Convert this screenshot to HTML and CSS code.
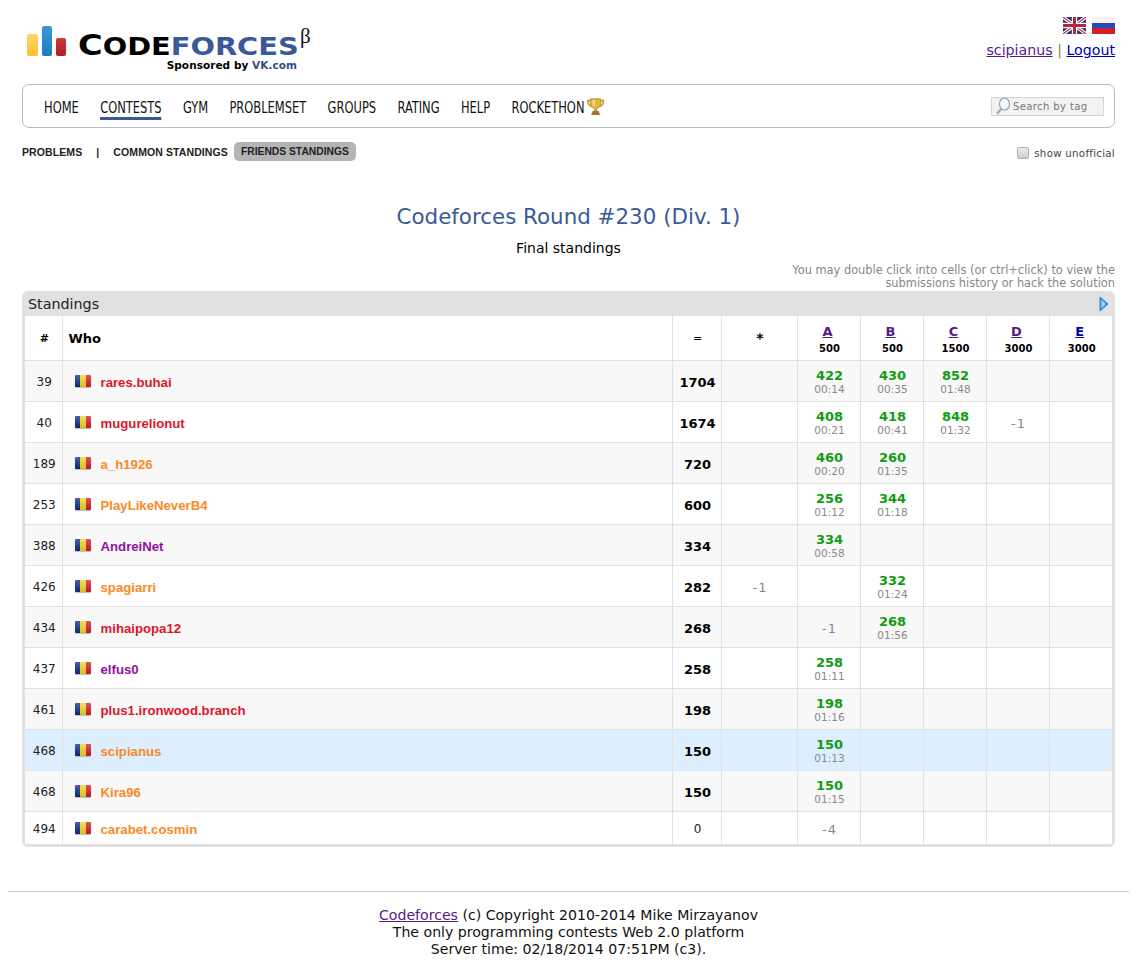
FILE: index.html
```html
<!DOCTYPE html>
<html lang="en">
<head>
    <meta charset="UTF-8">
    <meta name="viewport" content="width=device-width, initial-scale=1.0">
    <title>Codeforces Round #230 (Div. 1) - Standings</title>
    <link rel="stylesheet" href="styles.css">
</head>
<body>
    <div class="page">
        <div class="header">
            <div class="logo">
                <div class="logoBars"><span class="barY"></span><span class="barB"></span><span class="barR"></span></div>
                <div class="logoText">
                    <div class="logoTop">
                        <div class="logoName"><span class="bigC">C</span>ODE<span class="cBlue">FORCES</span></div>
                        <span class="beta">&beta;</span>
                    </div>
                    <div class="logoSponsor">Sponsored by <span class="cBlue">VK.com</span></div>
                </div>
            </div>
            <div class="headerRight">
                <div class="flags">
                    <svg width="23" height="17" viewBox="0 0 60 44"><rect width="60" height="44" fill="#2b2a6b"/><path d="M0 0L60 44M60 0L0 44" stroke="#fff" stroke-width="9"/><path d="M0 0L60 44M60 0L0 44" stroke="#b3263c" stroke-width="3"/><path d="M30 0V44M0 22H60" stroke="#fff" stroke-width="14"/><path d="M30 0V44M0 22H60" stroke="#b3263c" stroke-width="8"/></svg>
                    <span class="flagRu"></span>
                </div>
                <div class="userLinks"><a href="#" class="visited">scipianus</a> <span class="sep">|</span> <a href="#">Logout</a></div>
            </div>
        </div>

        <div class="nav">
            <ul class="navList">
                <li>Home</li>
                <li class="active">Contests</li>
                <li>Gym</li>
                <li>Problemset</li>
                <li>Groups</li>
                <li>Rating</li>
                <li>Help</li>
                <li class="rocket">Rockethon
                    <svg class="trophy" width="18" height="18" viewBox="0 0 18 18"><path d="M4 2.500H1.200C1.200 6 2.500 8 5.500 8.500M14 2.500H16.800C16.800 6 15.500 8 12.500 8.500" fill="none" stroke="#c2952c" stroke-width="1.600"/><path d="M3.800 .8H14.200V5.500C14.200 8.500 11.500 10 10 10.500V13H8V10.500C6.500 10 3.800 8.500 3.800 5.500Z" fill="#e3b63f" stroke="#a67f20" stroke-width=".7"/><path d="M6 2V6C6 7.500 7 8.500 8 9V2Z" fill="#f6e08a"/><path d="M6 13H12L13.500 17H4.500Z" fill="#a5722a"/></svg>
                </li>
            </ul>
            <div class="search">
                <svg width="16" height="18" viewBox="0 0 16 18"><ellipse cx="9.500" cy="7" rx="5" ry="6" fill="#f7fafc" stroke="#8ea5b5" stroke-width="1.200"/><path d="M6 12L2 17" stroke="#a8a8a8" stroke-width="2.200"/></svg>
                <span>Search by tag</span>
            </div>
        </div>

        <div class="subMenu">
            <div class="subLinks">
                <span>Problems</span>
                <span class="subSep">|</span>
                <span>Common standings</span>
                <span class="subActive">Friends standings</span>
            </div>
            <label class="unofficial"><span class="fakeCheck"></span>show unofficial</label>
        </div>

        <h1 class="contestTitle">Codeforces Round #230 (Div. 1)</h1>
        <div class="finalText">Final standings</div>
        <div class="hint">You may double click into cells (or ctrl+click) to view the<br>submissions history or hack the solution</div>

        <div class="box">
            <div class="boxTitle">
                <span>Standings</span>
                <svg width="10" height="16" viewBox="0 0 10 16"><path d="M1 1L9 8L1 15Z" fill="#4a9be0" stroke="#2f7fc4" stroke-width="1"/><path d="M2.500 4L6.500 8L2.500 12Z" fill="#a5d2f5"/></svg>
            </div>
            <table class="standings">
                <colgroup>
                    <col class="cRank"><col class="cWho"><col class="cScore"><col class="cHack">
                    <col class="cProb"><col class="cProb"><col class="cProb"><col class="cProb"><col class="cProb">
                </colgroup>
                <tr class="headRow">
                    <th>#</th>
                    <th class="who">Who</th>
                    <th class="eq">=</th>
                    <th class="star">*</th>
                    <th><a href="#" class="visited">A</a><small>500</small></th>
                    <th><a href="#" class="visited">B</a><small>500</small></th>
                    <th><a href="#" class="visited">C</a><small>1500</small></th>
                    <th><a href="#" class="visited">D</a><small>3000</small></th>
                    <th><a href="#">E</a><small>3000</small></th>
                </tr>
                <tr class="dark">
                    <td>39</td><td class="who"><span class="flagRo"></span><a class="red">rares.buhai</a></td><td class="total">1704</td><td></td>
                    <td><b>422</b><i>00:14</i></td><td><b>430</b><i>00:35</i></td><td><b>852</b><i>01:48</i></td><td></td><td></td>
                </tr>
                <tr>
                    <td>40</td><td class="who"><span class="flagRo"></span><a class="red">mugurelionut</a></td><td class="total">1674</td><td></td>
                    <td><b>408</b><i>00:21</i></td><td><b>418</b><i>00:41</i></td><td><b>848</b><i>01:32</i></td><td class="neg">-1</td><td></td>
                </tr>
                <tr class="dark">
                    <td>189</td><td class="who"><span class="flagRo"></span><a class="orange">a_h1926</a></td><td class="total">720</td><td></td>
                    <td><b>460</b><i>00:20</i></td><td><b>260</b><i>01:35</i></td><td></td><td></td><td></td>
                </tr>
                <tr>
                    <td>253</td><td class="who"><span class="flagRo"></span><a class="orange">PlayLikeNeverB4</a></td><td class="total">600</td><td></td>
                    <td><b>256</b><i>01:12</i></td><td><b>344</b><i>01:18</i></td><td></td><td></td><td></td>
                </tr>
                <tr class="dark">
                    <td>388</td><td class="who"><span class="flagRo"></span><a class="purple">AndreiNet</a></td><td class="total">334</td><td></td>
                    <td><b>334</b><i>00:58</i></td><td></td><td></td><td></td><td></td>
                </tr>
                <tr>
                    <td>426</td><td class="who"><span class="flagRo"></span><a class="orange">spagiarri</a></td><td class="total">282</td><td class="neg">-1</td>
                    <td></td><td><b>332</b><i>01:24</i></td><td></td><td></td><td></td>
                </tr>
                <tr class="dark">
                    <td>434</td><td class="who"><span class="flagRo"></span><a class="red">mihaipopa12</a></td><td class="total">268</td><td></td>
                    <td class="neg">-1</td><td><b>268</b><i>01:56</i></td><td></td><td></td><td></td>
                </tr>
                <tr>
                    <td>437</td><td class="who"><span class="flagRo"></span><a class="purple">elfus0</a></td><td class="total">258</td><td></td>
                    <td><b>258</b><i>01:11</i></td><td></td><td></td><td></td><td></td>
                </tr>
                <tr class="dark">
                    <td>461</td><td class="who"><span class="flagRo"></span><a class="red">plus1.ironwood.branch</a></td><td class="total">198</td><td></td>
                    <td><b>198</b><i>01:16</i></td><td></td><td></td><td></td><td></td>
                </tr>
                <tr class="me">
                    <td>468</td><td class="who"><span class="flagRo"></span><a class="orange">scipianus</a></td><td class="total">150</td><td></td>
                    <td><b>150</b><i>01:13</i></td><td></td><td></td><td></td><td></td>
                </tr>
                <tr class="dark">
                    <td>468</td><td class="who"><span class="flagRo"></span><a class="orange">Kira96</a></td><td class="total">150</td><td></td>
                    <td><b>150</b><i>01:15</i></td><td></td><td></td><td></td><td></td>
                </tr>
                <tr class="lastRow">
                    <td>494</td><td class="who"><span class="flagRo"></span><a class="orange">carabet.cosmin</a></td><td class="zero">0</td><td></td>
                    <td class="neg">-4</td><td></td><td></td><td></td><td></td>
                </tr>
            </table>
        </div>
    </div>

    <div class="footer">
        <a href="#" class="visited">Codeforces</a> (c) Copyright 2010-2014 Mike Mirzayanov<br>
        The only programming contests Web 2.0 platform<br>
        Server time: 02/18/2014 07:51PM (c3).
    </div>
</body>
</html>
```

FILE: styles.css
```css
body {
    margin: 8px;
    background-color: #fff;
    color: #000;
    font-family: "DejaVu Sans", Verdana, sans-serif;
    font-size: 13px;
}
a {
    color: #00a;
}
a.visited {
    color: #551a8b;
}
.page {
    padding: 0 14px;
}

/* header */
.header {
    display: flex;
    justify-content: space-between;
    height: 76px;
}
.logo {
    display: flex;
    padding: 9px 0 0 5px;
}
.logoBars {
    display: flex;
    align-items: flex-end;
    gap: 4px;
    height: 30px;
    margin-top: 9px;
}
.logoBars span {
    display: block;
    border-radius: 2px;
}
.barY {
    width: 11px;
    height: 22px;
    background: linear-gradient(#fbd767, #fbc02e);
}
.barB {
    width: 10px;
    height: 30px;
    background: linear-gradient(#3a9ad9, #1a7cc0);
}
.barR {
    width: 10px;
    height: 18px;
    background: linear-gradient(#c93a3a, #b11e24);
}
.logoText {
    margin-left: 12px;
    width: 240px;
}
.logoTop {
    display: flex;
    height: 36px;
    margin-top: 8px;
}
.logoName {
    width: 222px;
    font-size: 24px;
    font-weight: bold;
    line-height: 30px;
    margin-top: 6px;
    white-space: nowrap;
    transform: scaleX(1.2);
    transform-origin: left;
}
.bigC {
    font-size: 28px;
}
.cBlue {
    color: #3b5998;
}
.beta {
    font-family: "Liberation Serif", serif;
    font-size: 21px;
    line-height: 24px;
    margin-top: -1px;
    color: #111;
}
.logoSponsor {
    font-size: 10.500px;
    font-weight: bold;
    text-align: right;
    line-height: 12px;
    margin-top: -2px;
    width: 219px;
    letter-spacing: 0.05px;
}
.logoSponsor .cBlue {
    color: #2f4d86;
}
.headerRight {
    text-align: right;
    padding-top: 9px;
}
.flags {
    display: flex;
    justify-content: flex-end;
    gap: 6px;
    height: 17px;
}
.flagRu {
    display: block;
    width: 23px;
    height: 17px;
    background: linear-gradient(#f4f4f4 33%, #2b47b5 33%, #2b47b5 66%, #d1202a 66%);
}
.userLinks {
    font-size: 14.200px;
    margin-top: 8px;
    line-height: 17px;
}
.sep {
    color: #8a8a50;
}

/* nav */
.nav {
    display: flex;
    justify-content: space-between;
    align-items: center;
    height: 42px;
    border: 1px solid #b9b9b9;
    border-radius: 7px;
    padding: 0 10px 0 21px;
}
.navList {
    display: flex;
    gap: 25.100px;
    margin: 0;
    padding: 0;
    list-style: none;
    font-family: "Liberation Sans Narrow", "DejaVu Sans Condensed", sans-serif;
    font-size: 15px;
    text-transform: uppercase;
    color: #111;
    transform: scaleX(0.85);
    transform-origin: left;
}
.navList li {
    border-bottom: 3px solid transparent;
    margin-top: 7px;
}
.navList li.active {
    border-bottom-color: #3b5998;
}
.rocket {
    display: flex;
    align-items: flex-start;
    gap: 4px;
}
.trophy {
    transform: scaleX(1.176);
    margin-top: -1px;
}
.search {
    display: flex;
    align-items: center;
    gap: 2px;
    width: 113px;
    height: 19px;
    box-sizing: border-box;
    background-color: #f2f2f2;
    border: 1px solid #d5d5d5;
    color: #777;
    font-size: 10px;
    letter-spacing: 0.4px;
    padding-left: 3px;
}

/* sub menu */
.subMenu {
    display: flex;
    justify-content: space-between;
    align-items: center;
    margin-top: 14px;
    height: 20px;
}
.subLinks {
    display: flex;
    align-items: center;
    font-family: "Liberation Sans", Arial, sans-serif;
    font-size: 10.500px;
    font-weight: bold;
    text-transform: uppercase;
    letter-spacing: 0.1px;
    color: #222;
}
.subSep {
    margin: 0 14px;
}
.subActive {
    background-color: #b4b4b4;
    border-radius: 5px;
    padding: 4px 7px;
    margin: -2px 0 0 6px;
    font-size: 10.300px;
    letter-spacing: 0;
}
.unofficial {
    display: flex;
    align-items: center;
    color: #444;
    font-size: 10.200px;
    letter-spacing: 0.3px;
    margin-top: 2px;
}
.fakeCheck {
    display: block;
    width: 10px;
    height: 10px;
    border: 1px solid #b0b0b0;
    border-radius: 2px;
    background: linear-gradient(#ececec, #cfcfcf);
    margin-right: 5px;
}

/* titles */
.contestTitle {
    margin: 42px 0 0;
    font-size: 21.400px;
    font-weight: normal;
    line-height: 26px;
    text-align: center;
    color: #3b5998;
}
.finalText {
    margin-top: 10px;
    text-align: center;
    font-size: 14px;
    line-height: 16px;
}
.hint {
    margin-top: 8px;
    text-align: right;
    font-size: 11.400px;
    line-height: 13px;
    color: #888;
}

/* standings box */
.box {
    margin-top: 1px;
    background-color: #e1e1e1;
    border-radius: 6px;
    padding: 0 3px 3px;
}
.boxTitle {
    display: flex;
    justify-content: space-between;
    align-items: center;
    height: 25px;
    padding: 0 3px;
    font-size: 14.300px;
    color: #222;
}
.standings {
    width: 1087px;
    table-layout: fixed;
    border-collapse: collapse;
    background-color: #fff;
    font-size: 12px;
    text-align: center;
    color: #222;
}
.cRank {
    width: 37px;
}
.cWho {
    width: 610px;
}
.cScore {
    width: 49px;
}
.cHack {
    width: 76px;
}
.cProb {
    width: 63px;
}
.standings td, .standings th {
    border: 1px solid #e1e1e1;
    padding: 0 0 0 2px;
    height: 40px;
}
.standings td {
    padding-top: 2px;
    height: 38px;
}
.standings tr:first-child th {
    border-top: 0;
}
.standings td:first-child, .standings th:first-child {
    border-left: 0;
}
.standings td:last-child, .standings th:last-child {
    border-right: 0;
}
.standings tr:last-child td {
    border-bottom: 0;
}
.headRow th {
    height: 44px;
    font-size: 11px;
    color: #000;
}
.standings th.who {
    text-align: left;
    padding-left: 6px;
    font-size: 13px;
}
.eq {
    font-weight: normal;
    font-size: 13px;
}
.headRow th.star {
    font-size: 14px;
}
.headRow th a {
    display: block;
    font-size: 13px;
    line-height: 17px;
    margin: 1px 4px 0 0;
}
.headRow small {
    display: block;
    font-size: 10px;
    line-height: 13px;
    margin-top: 2px;
}
.dark td {
    background-color: #f8f8f8;
}
.me td {
    background-color: #ddeeff;
}
.standings .lastRow td {
    height: 30px;
}
.standings td.who {
    text-align: left;
    padding-left: 12px;
}
.flagRo {
    display: inline-block;
    vertical-align: 0;
    width: 16px;
    height: 12px;
    margin-right: 10px;
    border-radius: 1px;
    background: linear-gradient(rgba(255, 255, 255, 0.25), rgba(0, 0, 0, 0.1)), linear-gradient(to right, #0e2a84 33%, #f4d31f 33%, #f4d31f 66%, #cf1b2b 66%);
    box-shadow: 0 1px 1px #bbb;
}
.who a {
    font-family: "Liberation Sans", Arial, sans-serif;
    font-size: 13.200px;
    font-weight: bold;
    text-decoration: none;
}
.red {
    color: #dd162b;
}
.orange {
    color: #f98a26;
}
.purple {
    color: #9012a0;
}
.total {
    font-weight: bold;
    font-size: 13px;
    color: #000;
}
.zero {
    font-size: 12px;
}
.standings td b {
    display: block;
    font-size: 13px;
    line-height: 14px;
    color: #119c11;
}
.standings td i {
    display: block;
    font-style: normal;
    font-size: 10.500px;
    line-height: 13px;
    color: #888;
}
.neg {
    color: #888;
    font-size: 13px;
    letter-spacing: 1px;
}

/* footer */
.footer {
    margin-top: 44px;
    padding-top: 15px;
    border-top: 1px solid #ccc;
    text-align: center;
    font-size: 14.100px;
    line-height: 17px;
    color: #111;
}
```
